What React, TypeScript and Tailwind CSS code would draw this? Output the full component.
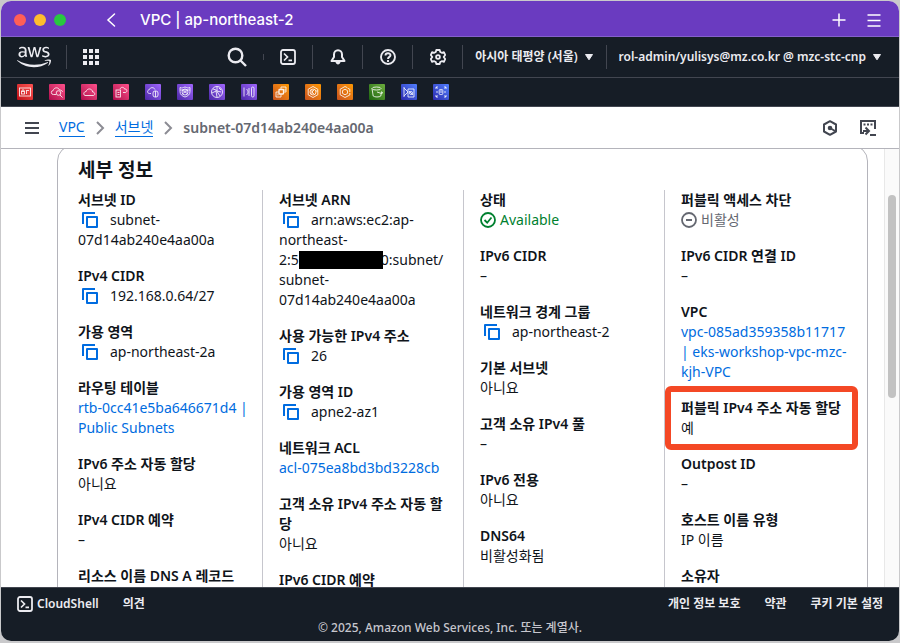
import React from "react";
import type { ReactNode } from "react";
import { FaAws } from "react-icons/fa";

function TerminalIcon() {
  return (
    <svg viewBox="0 0 16 16" className="size-4 shrink-0" fill="none" stroke="currentColor" strokeWidth="1.800">
      <rect x="1" y="1" width="14" height="14" rx="2" />
      <path d="M4 4.500 7.500 8 4 11.500M8.500 11.300H12" strokeWidth="1.700" />
    </svg>
  );
}

function CopyIcon() {
  return (
    <svg viewBox="0 0 16 16" className="size-4" fill="none" stroke="currentColor" strokeWidth="2" strokeLinejoin="round">
      <path d="M1 12V1h12" />
      <rect x="5" y="5" width="10" height="10" />
    </svg>
  );
}

function Caret() {
  return (
    <svg viewBox="0 0 10 8" className="h-2 w-2.5 shrink-0" fill="currentColor">
      <path d="M1.500 1.500h7L5 6.800z" stroke="currentColor" strokeLinejoin="round" />
    </svg>
  );
}

function Chevron() {
  return (
    <svg viewBox="0 0 16 16" className="size-4 shrink-0 text-[#8c8c94]" fill="none" stroke="currentColor" strokeWidth="2">
      <path d="m5 2 6 6-6 6" />
    </svg>
  );
}

const services: { name: string; tone: string; art: ReactNode }[] = [
  { name: "Billing", tone: "from-[#bd0816] to-[#ff5252]", art: <><rect x="2.500" y="4" width="11" height="8" /><rect x="4.500" y="7.500" width="3" height="2.500" /><path d="M5 7.500V6h2v1.500M9 6.500h3M9.500 10V6.500" /></> },
  { name: "CloudWatch", tone: "from-[#b0084d] to-[#ff4f8b]", art: <><path d="M7 10.500H4.500a2 2 0 0 1-.3-4C5 3 9.500 3 10.500 6c2 0 3 1 3 2" /><circle cx="9.500" cy="9" r="2.300" /><path d="m11 11 2.500 2.500" /></> },
  { name: "CloudTrail", tone: "from-[#b0084d] to-[#ff4f8b]", art: <path d="M4 11.500h8.500c2-.5 1.500-3.500-.8-3.500C11 4 6 4 5.200 7.500 2.500 7.500 2 11 4 11.500Z" /> },
  { name: "Config", tone: "from-[#b0084d] to-[#ff4f8b]", art: <><rect x="3" y="6" width="4.500" height="7" /><path d="M4.500 8.500h2M4.500 10.500h2M7 5c1-2.500 4-2 4.500 0 3-.2 3 3 1 3.500H10" /></> },
  { name: "Cloud Directory", tone: "from-[#4d27a8] to-[#a166ff]", art: <><path d="M6 9.500H4.500c-2.500 0-2.500-3.500-.2-3.800C5 3 9 3 10 5.500" /><rect x="8" y="7" width="5" height="6" rx="2" /><path d="M10.500 7v6" /></> },
  { name: "WAF", tone: "from-[#4d27a8] to-[#a166ff]", art: <><path d="M3 3.500c2 1 3 0 5-.5 2 .5 3 1.500 5 .5v4c0 3-2 4.500-5 5.500-3-1-5-2.500-5-5.500Z" /><circle cx="8" cy="8" r="3" /><path d="M3 6h10M5 10l6-4M5 6l6 4" /></> },
  { name: "Route 53", tone: "from-[#4d27a8] to-[#a166ff]", art: <><circle cx="8" cy="8" r="5.500" /><path d="M4 5l3 1 4 6M8 3v4l4 1M3 9l4-2 1 6M10 4l2 2" /></> },
  { name: "Direct Connect", tone: "from-[#4d27a8] to-[#a166ff]", art: <><path d="M3 3.500v9M5.500 5c2 2 2 4 0 6M8 4v8" /><rect x="10.500" y="3" width="2.500" height="10" rx="1.200" /></> },
  { name: "EC2", tone: "from-[#c8511b] to-[#ff9900]", art: <><rect x="6" y="5.500" width="4.500" height="4.500" rx=".5" strokeWidth="1.300" /><path d="M8 5.500V3h5v5h-2.500M6 8H3v5h5v-3M11 6h2M5 9.500v2" /></> },
  { name: "EKS", tone: "from-[#c8511b] to-[#ff9900]", art: <><path d="m8 2.500 4.800 2.700v5.600L8 13.500l-4.800-2.700V5.200Z" /><circle cx="8" cy="8" r="3" /><path d="M7 6v4M7 8l2-2M7 8l2 2M11 7h2" /></> },
  { name: "ECS", tone: "from-[#c8511b] to-[#ff9900]", art: <><path d="M12.800 9v2L8 13.500l-4.800-2.700V5.200L8 2.500l2 1" /><path d="m8 5.200 2.500 1.400v2.800L8 10.800 5.500 9.400V6.600ZM10.500 4l2.300 1.300V8" /></> },
  { name: "S3", tone: "from-[#1b660f] to-[#6cae3e]", art: <><path d="M3 4.500 4.200 12c1.500 1.300 6.100 1.300 7.600 0L12.500 8" /><ellipse cx="7.500" cy="4.500" rx="4.500" ry="1.500" /><path d="m8 8 4.500 1.500c2 0 1-1.500-.2-2" /></> },
  { name: "DMS", tone: "from-[#2e27ad] to-[#527fff]", art: <><path d="M3 3v10M3 4l4 4-4 4M7 5h6v8H7Z" /><circle cx="10" cy="9" r="1.500" /><path d="M8 7l4 4" /></> },
  { name: "RDS", tone: "from-[#2e27ad] to-[#527fff]", art: <><path d="M3 5V3h2M13 5V3h-2M3 11v2h2M13 11v2h-2M3 3l1.500 1.500M13 3l-1.500 1.500M3 13l1.500-1.500M13 13l-1.500-1.500" /><rect x="6.200" y="5.500" width="3.600" height="5" rx="1" /><path d="M8 6v3M4 7v2M12 7v2" /></> },
];

function Copyable({ label, children }: { label: string; children: ReactNode }) {
  return (
    <>
      <button aria-label={label + " 복사"} className="mr-3 ml-1 inline-block align-[-3px] text-[#006ce0]">
        <CopyIcon />
      </button>
      {children}
    </>
  );
}

function Field({ label, children, marked }: { label: ReactNode; children?: ReactNode; marked?: boolean }) {
  return (
    <div className="relative">
      <dt className="font-semibold">{label}</dt>
      <dd>{children}</dd>
      {marked && (
        <div className="pointer-events-none absolute -top-3 -right-2 -bottom-3 -left-4 rounded-md border-[6px] border-[#f44825]" />
      )}
    </div>
  );
}

function Column({ children, divided = true }: { children: ReactNode; divided?: boolean }) {
  return (
    <dl className={divided ? "-ml-[17px] flex flex-col gap-4 border-l border-[#c6c6cd] pl-4" : "flex flex-col gap-4"}>
      {children}
    </dl>
  );
}

function Link({ children }: { children: ReactNode }) {
  return <a href="#" className="whitespace-nowrap text-[#006ce0]">{children}</a>;
}

function NavButton({ label, children }: { label: string; children: ReactNode }) {
  return (
    <button aria-label={label} className="flex h-6 w-[50px] items-center justify-center border-l border-[#424650]">
      {children}
    </button>
  );
}

export default function App() {
  return (
    <div className="h-screen bg-[#c9c9cb] p-px pb-0.5 font-['Noto_Sans','Noto_Sans_CJK_KR',sans-serif] text-[#0f141a]">
      <div className="flex h-full flex-col overflow-hidden rounded-[10px] bg-white">
        <header className="flex h-9 shrink-0 items-center border-b border-[#8560cc] bg-[#6a3bc0] pt-0.5 pr-3.5 pl-[13px] text-white">
          <div className="flex gap-2">
            <span className="size-3 rounded-full bg-[#ff5f57]" />
            <span className="size-3 rounded-full bg-[#febc2e]" />
            <span className="size-3 rounded-full bg-[#28c840]" />
          </div>
          <button aria-label="뒤로" className="ml-10">
            <svg viewBox="0 0 10 16" className="h-4 w-2.5" fill="none" stroke="currentColor" strokeWidth="1.500" strokeLinecap="round">
              <path d="M8.500 2 2 8l6.500 6" />
            </svg>
          </button>
          <h1 className="ml-6 pt-0.5 font-['Inter',sans-serif] text-[15px] font-medium">VPC | ap-northeast-2</h1>
          <button aria-label="새 탭" className="ml-auto">
            <svg viewBox="0 0 14 14" className="size-3.5" stroke="currentColor" strokeWidth="1.500"><path d="M7 .5v13M.5 7h13" /></svg>
          </button>
          <button aria-label="메뉴" className="mr-1 ml-[21px]">
            <svg viewBox="0 0 14 14" className="size-3.5" stroke="currentColor" strokeWidth="1.500"><path d="M.5 2h13M.5 7.500h13M.5 13h13" /></svg>
          </button>
        </header>

        <nav className="shrink-0 bg-[#161d26] text-[12px] font-semibold text-[#ebebf0]">
          <div className="flex h-[41px] items-center border-b border-[#424650] pl-4">
            <a href="#" aria-label="AWS"><FaAws className="h-7 w-[34px]" /></a>
            <span className="ml-[15px] h-6 border-l border-[#424650]" />
            <button aria-label="서비스" className="ml-4">
              <svg viewBox="0 0 16 16" className="size-4" fill="currentColor">
                <path d="M0 0h4v4H0zM6 0h4v4H6zM12 0h4v4h-4zM0 6h4v4H0zM6 6h4v4H6zM12 6h4v4h-4zM0 12h4v4H0zM6 12h4v4H6zM12 12h4v4h-4z" />
              </svg>
            </button>
            <button aria-label="검색" className="mr-4 ml-auto">
              <svg viewBox="0 0 20 20" className="size-5" fill="none" stroke="currentColor" strokeWidth="2.400">
                <circle cx="8.500" cy="8.500" r="6.800" /><path d="m13 13 6 6" />
              </svg>
            </button>
            <span className="h-1.5 border-l border-[#424650]" />
            <button aria-label="CloudShell" className="flex w-12 items-center justify-center"><TerminalIcon /></button>
            <NavButton label="알림">
              <svg viewBox="0 0 16 16" className="size-4" fill="none" stroke="currentColor" strokeWidth="2" strokeLinejoin="round">
                <path d="M4 8V5.500C4 3 5.700 1.200 8 1.200s4 1.800 4 4.300V8l2.500 4h-13Z" /><path d="M5.500 13c.5 3.300 4.500 3.300 5 0Z" fill="currentColor" stroke="none" />
              </svg>
            </NavButton>
            <NavButton label="지원">
              <svg viewBox="0 0 16 16" className="size-4" fill="none" stroke="currentColor" strokeWidth="1.900">
                <circle cx="8" cy="8" r="7" /><path d="M5.500 6.500C5.500 3.500 10.500 3.500 10.500 6.300 10.500 8 8 7.800 8 10M8 11v2" />
              </svg>
            </NavButton>
            <NavButton label="설정">
              <svg viewBox="0 0 16 16" className="size-4" fill="none" stroke="currentColor" strokeWidth="1.800" strokeLinejoin="round">
                <path d="M6.300 1h3.400l.5 2 1.900.8 1.800-.6 1.300 2.700L13.700 8l1.500 2.100-1.300 2.700-1.800-.6-1.900.8-.5 2H6.300l-.5-2-1.900-.8-1.800.6L.8 10.100 2.300 8 .8 5.900l1.300-2.700 1.800.6L5.800 3Z" />
                <circle cx="8" cy="8" r="1.900" />
              </svg>
            </NavButton>
            <button className="flex h-6 items-center gap-1.5 border-l border-[#424650] px-3">아시아 태평양 (서울)<Caret /></button>
            <button className="flex h-6 items-center gap-1.5 border-l border-[#424650] pr-[17px] pl-3">rol-admin/yulisys@mz.co.kr @ mzc-stc-cnp<Caret /></button>
          </div>
          <div className="flex h-[29px] items-center gap-4 border-b border-[#424650] px-4">
            {services.map((s) => (
              <a key={s.name} href="#" aria-label={s.name} className={"size-4 rounded-[1px] bg-linear-to-tr " + s.tone}>
                <svg viewBox="0 0 16 16" className="size-4" fill="none" stroke="white" strokeWidth=".9" opacity=".9">{s.art}</svg>
              </a>
            ))}
          </div>
        </nav>

        <div className="flex h-[42px] shrink-0 items-center border-b border-[#b4b4bb] pr-[23px] pl-6 text-[14px] leading-5">
          <button aria-label="탐색 메뉴" className="text-[#424650]">
            <svg viewBox="0 0 14 14" className="size-3.5" stroke="currentColor" strokeWidth="2"><path d="M0 2h14M0 7h14M0 12h14" /></svg>
          </button>
          <div className="ml-5 flex items-center gap-[7px]">
            <a href="#" className="border-b border-[#006ce0] leading-[18px] text-[#006ce0]">VPC</a>
            <Chevron />
            <a href="#" className="border-b border-[#006ce0] leading-[18px] text-[#006ce0]">서브넷</a>
            <Chevron />
            <span className="font-semibold text-[#656871]">subnet-07d14ab240e4aa00a</span>
          </div>
          <button aria-label="Amazon Q" className="ml-auto text-[#424650]">
            <svg viewBox="0 0 16 16" className="size-4" fill="none" stroke="currentColor" strokeWidth="2">
              <path d="m8 1.200 6 3.300v7L8 14.800 2 11.500v-7Z" strokeLinejoin="round" /><circle cx="8" cy="8" r="1.300" fill="currentColor" /><path d="m8 8 5 3" />
            </svg>
          </button>
          <button aria-label="터미널 열기" className="ml-[22px] text-[#424650]">
            <svg viewBox="0 0 16 16" className="size-4" fill="none" stroke="currentColor" strokeWidth="2">
              <path d="M4 13H1V1h14v8M10 15h6M3 11h5M5.500 7.500 9 11l-3.500 3.500M3.500 4.500h2M7 4.500h2M10.500 4.500h2" />
            </svg>
          </button>
        </div>

        <div className="flex min-h-0 flex-1">
          <main className="min-w-0 flex-1 overflow-hidden pr-4 pl-14">
            <section className="-mt-1 rounded-t-2xl border border-[#b4b4bb] pt-2.5 pr-[17px] pl-5 text-[14px] leading-5">
              <h2 className="pb-1.5 text-[19px] leading-7 font-semibold">세부 정보</h2>
              <div className="grid grid-cols-4 gap-x-8">
                <Column divided={false}>
                  <Field label="서브넷 ID"><Copyable label="서브넷 ID">subnet-<br />07d14ab240e4aa00a</Copyable></Field>
                  <Field label="IPv4 CIDR"><Copyable label="IPv4 CIDR">192.168.0.64/27</Copyable></Field>
                  <Field label="가용 영역"><Copyable label="가용 영역">ap-northeast-2a</Copyable></Field>
                  <Field label="라우팅 테이블"><Link>rtb-0cc41e5ba646671d4 |<br />Public Subnets</Link></Field>
                  <Field label="IPv6 주소 자동 할당">아니요</Field>
                  <Field label="IPv4 CIDR 예약">–</Field>
                  <Field label="리소스 이름 DNS A 레코드" />
                </Column>
                <Column>
                  <Field label="서브넷 ARN">
                    <Copyable label="서브넷 ARN">
                      arn:aws:ec2:ap-<br />northeast-<br />
                      <span className="whitespace-nowrap">2:5<span className="relative -mr-0.5 inline-block h-[18px] w-[84px] bg-black align-text-bottom" />0:subnet/</span><br />
                      subnet-<br />07d14ab240e4aa00a
                    </Copyable>
                  </Field>
                  <Field label="사용 가능한 IPv4 주소"><Copyable label="사용 가능한 IPv4 주소">26</Copyable></Field>
                  <Field label="가용 영역 ID"><Copyable label="가용 영역 ID">apne2-az1</Copyable></Field>
                  <Field label="네트워크 ACL"><Link>acl-075ea8bd3bd3228cb</Link></Field>
                  <Field label={<>고객 소유 IPv4 주소 자동 할<br />당</>}>아니요</Field>
                  <Field label="IPv6 CIDR 예약" />
                </Column>
                <Column>
                  <Field label="상태">
                    <span className="flex items-center gap-1 text-[#00802f]">
                      <svg viewBox="0 0 16 16" className="size-4" fill="none" stroke="currentColor" strokeWidth="1.800"><circle cx="8" cy="8" r="7" /><path d="m4.500 8 2.700 2.700L11.500 5.500" /></svg>
                      Available
                    </span>
                  </Field>
                  <Field label="IPv6 CIDR">–</Field>
                  <Field label="네트워크 경계 그룹"><Copyable label="네트워크 경계 그룹">ap-northeast-2</Copyable></Field>
                  <Field label="기본 서브넷">아니요</Field>
                  <Field label="고객 소유 IPv4 풀">–</Field>
                  <Field label="IPv6 전용">아니요</Field>
                  <Field label="DNS64">비활성화됨</Field>
                </Column>
                <Column>
                  <Field label="퍼블릭 액세스 차단">
                    <span className="flex items-center gap-1 text-[#656871]">
                      <svg viewBox="0 0 16 16" className="size-4" fill="none" stroke="currentColor" strokeWidth="1.800"><circle cx="8" cy="8" r="7" /><path d="M5 8h6" /></svg>
                      비활성
                    </span>
                  </Field>
                  <Field label="IPv6 CIDR 연결 ID">–</Field>
                  <Field label="VPC"><Link>vpc-085ad359358b11717<br />| eks-workshop-vpc-mzc-<br />kjh-VPC</Link></Field>
                  <Field label="퍼블릭 IPv4 주소 자동 할당" marked>예</Field>
                  <Field label="Outpost ID">–</Field>
                  <Field label="호스트 이름 유형">IP 이름</Field>
                  <Field label="소유자" />
                </Column>
              </div>
            </section>
          </main>
          <div className="w-[15px] shrink-0 border-l border-[#e8e8e8] bg-[#fafafa] pt-[46px] pl-[3px]">
            <div className="h-[203px] w-2 rounded-full bg-[#c2c2c2]" />
          </div>
        </div>

        <footer className="shrink-0 border-t border-[#424650] bg-[#161d26] px-4 text-[12px] leading-4 font-semibold text-[#ebebf0]">
          <div className="flex h-[31px] items-center gap-6">
            <button className="flex items-center gap-1"><TerminalIcon />CloudShell</button>
            <a href="#" className="mr-auto">의견</a>
            <a href="#">개인 정보 보호</a>
            <a href="#">약관</a>
            <a href="#">쿠키 기본 설정</a>
          </div>
          <p className="pt-px pb-[5px] text-center font-medium text-[#c6c6cd]">© 2025, Amazon Web Services, Inc. 또는 계열사.</p>
        </footer>
      </div>
    </div>
  );
}
